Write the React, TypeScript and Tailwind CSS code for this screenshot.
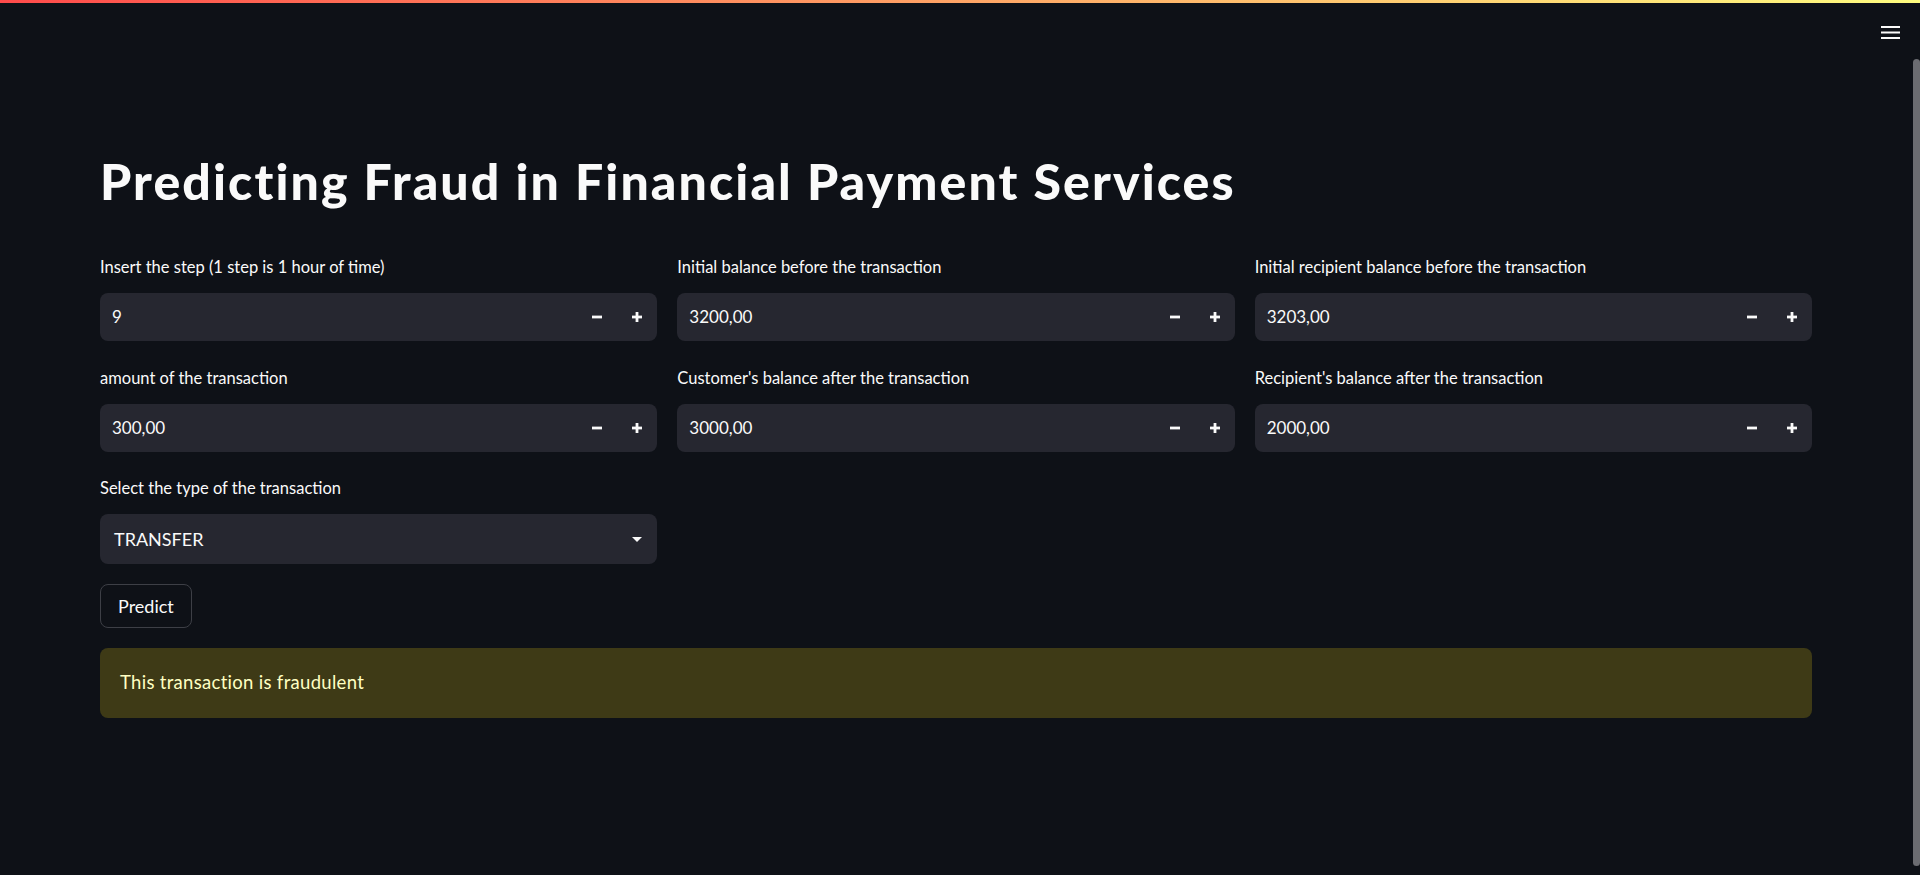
import React from "react";

const Minus = () => (
  <svg width="10" height="10" viewBox="0 0 10 10" fill="#fafafa">
    <rect x="0" y="3.6" width="10" height="2.8" />
  </svg>
);

const Plus = () => (
  <svg width="10" height="10" viewBox="0 0 10 10" fill="#fafafa">
    <rect x="0" y="3.6" width="10" height="2.8" />
    <rect x="3.6" y="0" width="2.8" height="10" />
  </svg>
);

function NumberInput({ label, value }: { label: string; value: string }) {
  return (
    <div className="flex flex-col">
      <div className="h-[20px] flex items-center mb-[16px] text-[16.5px] text-[#fafafa] whitespace-nowrap">{label}</div>
      <div className="h-[48px] bg-[#262730] rounded-[8px] flex items-center">
        <div className="flex-1 pl-[12px] text-[17px] text-[#fafafa]">{value}</div>
        <div className="w-[40px] h-full flex items-center justify-center"><Minus /></div>
        <div className="w-[40px] h-full flex items-center justify-center"><Plus /></div>
      </div>
    </div>
  );
}

export default function App() {
  return (
    <div className="w-[1920px] h-[875px] bg-[#0e1117] flex flex-col overflow-hidden [font-family:Lato,'Liberation_Sans',sans-serif]">
      <div className="h-[3px] bg-[linear-gradient(90deg,#ff4b4b,#fffd80)]" />
      <div className="h-[56px] flex justify-end items-start pt-[23px] pr-[20px]">
        <svg width="19" height="13" viewBox="0 0 19 13" fill="#fafafa">
          <rect x="0" y="0" width="19" height="2" />
          <rect x="0" y="5.5" width="19" height="2" />
          <rect x="0" y="11" width="19" height="2" />
        </svg>
      </div>
      <div className="flex-1 flex">
        <main className="flex-1 px-[100px] pt-[92px] flex flex-col">
          <h1 className="h-[60px] leading-[60px] text-[50px] font-black tracking-[2.1px] text-[#fafafa] mb-[46px] whitespace-nowrap">
            Predicting Fraud in Financial Payment Services
          </h1>
          <div className="grid grid-cols-3 gap-x-[20px] gap-y-[27px]">
            <NumberInput label="Insert the step (1 step is 1 hour of time)" value="9" />
            <NumberInput label="Initial balance before the transaction" value="3200,00" />
            <NumberInput label="Initial recipient balance before the transaction" value="3203,00" />
            <NumberInput label="amount of the transaction" value="300,00" />
            <NumberInput label="Customer's balance after the transaction" value="3000,00" />
            <NumberInput label="Recipient's balance after the transaction" value="2000,00" />
          </div>
          <div className="grid grid-cols-3 gap-x-[20px] mt-[26px]">
            <div className="flex flex-col">
              <div className="h-[20px] flex items-center mb-[16px] text-[16.5px] text-[#fafafa]">Select the type of the transaction</div>
              <div className="h-[50px] bg-[#262730] rounded-[8px] flex items-center pl-[14px] pr-[15px]">
                <div className="flex-1 text-[18px] text-[#fafafa]">TRANSFER</div>
                <svg width="10" height="5" viewBox="0 0 10 5" fill="#fafafa">
                  <path d="M0 0 L10 0 L5 5 Z" />
                </svg>
              </div>
            </div>
          </div>
          <div className="mt-[20px]">
            <button className="h-[44px] px-[17px] rounded-[8px] border border-[#3d3f46] bg-transparent text-[18px] text-[#fafafa] flex items-center">
              Predict
            </button>
          </div>
          <div className="mt-[20px] h-[70px] rounded-[8px] bg-[rgba(255,227,18,0.2)] flex items-center px-[20px] text-[18.5px] tracking-[0.3px] text-[#ffffc2]">
            This transaction is fraudulent
          </div>
        </main>
        <div className="w-[8px] flex justify-end pb-[9px]">
          <div className="w-[7px] h-full rounded-full bg-[#6b6c71]" />
        </div>
      </div>
    </div>
  );
}
